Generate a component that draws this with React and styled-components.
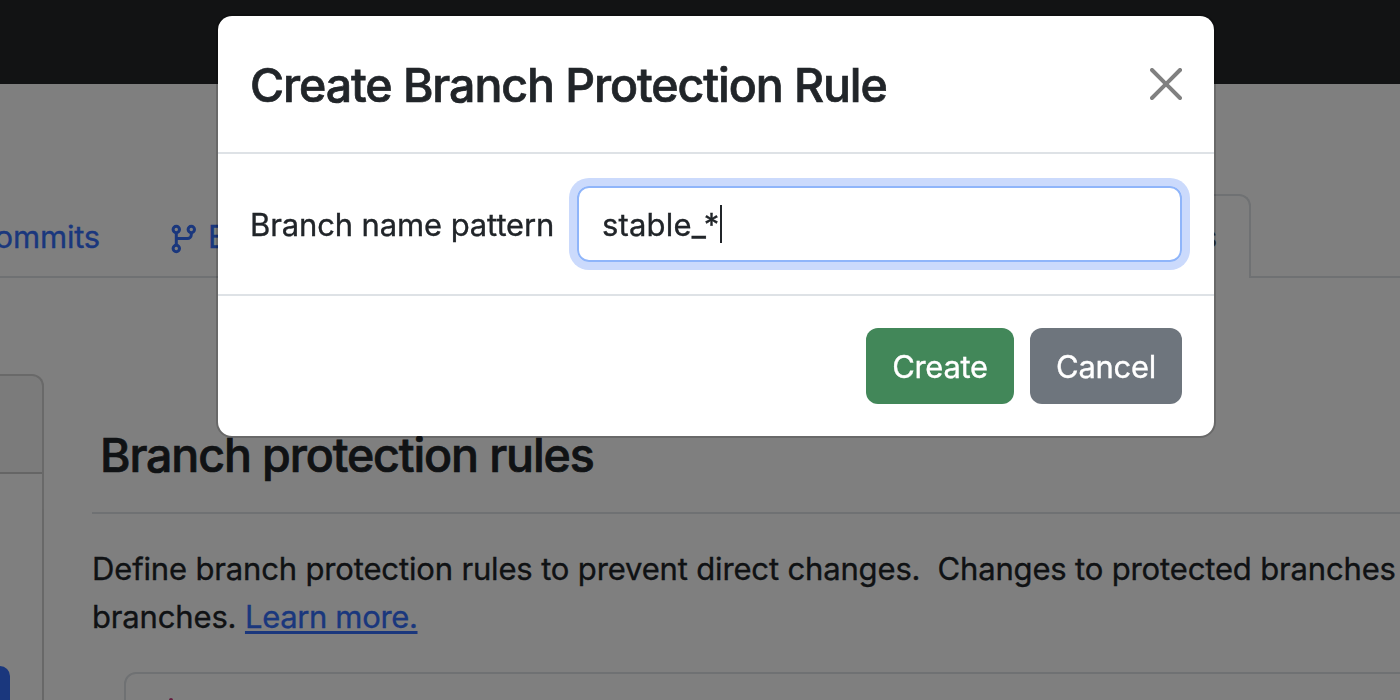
import React from 'react';
import styled, { createGlobalStyle } from 'styled-components';

const GlobalStyle = createGlobalStyle`
  *, *::before, *::after { box-sizing: border-box; }
  html, body { margin: 0; height: 100%; overflow: hidden; }
  body {
    background: #fff;
    color: #212529;
    font-family: Inter, "Liberation Sans", sans-serif;
    font-size: 31px;
    font-weight: 400;
    line-height: 48px;
    -webkit-text-stroke: 0.35px currentColor;
  }
`;

const Page = styled.div`
  display: flex;
  flex-direction: column;
  width: 1400px;
  height: 700px;
  overflow: hidden;
`;

const TopBar = styled.header`
  flex: none;
  height: 84px;
  background: #242628;
`;

const Tabs = styled.nav`
  flex: none;
  display: flex;
  height: 84px;
  margin-top: 110px;
  padding-right: 149px;
  border-bottom: 2px solid #dee2e6;
`;

const Tab = styled.a`
  display: flex;
  align-items: center;
  gap: 8px;
  height: 84px;
  padding: 0 32px;
  border: 2px solid transparent;
  border-bottom: 0;
  border-radius: 12px 12px 0 0;
  color: #346efa;
  white-space: nowrap;
  letter-spacing: -0.2px;
`;

const ClippedTab = styled(Tab)`
  width: 134px;
  padding-left: 0;
  border-left: 0;
  border-radius: 0;
  justify-content: flex-end;
`;

const ActiveTab = styled(Tab)`
  margin-left: auto;
  color: #495057;
  background: #fff;
  border-color: #dee2e6;
`;

const BranchIcon = styled.svg`
  width: 32px;
  height: 32px;
  margin-top: 2px;
  fill: none;
  stroke: currentColor;
`;

const Content = styled.div`
  flex: 1;
  display: flex;
  align-items: flex-start;
  min-height: 0;
`;

const Sidebar = styled.aside`
  flex: none;
  width: 44px;
  height: 360px;
  margin-top: 96px;
  border: 2px solid rgba(0, 0, 0, 0.175);
  border-left: 0;
  border-radius: 0 12px 0 0;
  overflow: hidden;
`;

const SidebarHeader = styled.div`
  height: 98px;
  background: rgba(0, 0, 0, 0.03);
  border-bottom: 2px solid rgba(0, 0, 0, 0.175);
`;

const SidebarButton = styled.div`
  width: 10px;
  height: 76px;
  margin-top: 192px;
  border-radius: 0 12px 12px 0;
  background: #346efa;
`;

const Main = styled.main`
  flex: none;
  width: 1400px;
  margin-left: 48px;
  padding-top: 148px;
`;

const SectionTitle = styled.h2`
  margin: 0 0 31px;
  padding: 0 8px 28px;
  border-bottom: 2px solid #dee2e6;
  font-size: 46.5px;
  font-weight: 500;
  line-height: 58px;
  letter-spacing: -1.12px;
  -webkit-text-stroke: 0.7px currentColor;
`;

const Description = styled.p`
  margin: 0;
  white-space: pre;
  letter-spacing: -0.155px;
`;

const Link = styled.a`
  color: #346efa;
  text-decoration: underline;
  text-decoration-thickness: 3px;
  text-underline-offset: 3px;
  letter-spacing: -0.35px;
`;

const RuleCard = styled.div`
  height: 120px;
  margin: 31px 0 0 32px;
  padding: 24px 32px;
  border: 2px solid #dee2e6;
  border-radius: 12px;
`;

const RuleMark = styled.div`
  width: 4px;
  height: 24px;
  margin-left: 11px;
  border-radius: 2px;
  background: #c63a7d;
`;

const Backdrop = styled.div`
  position: fixed;
  inset: 0;
  display: flex;
  justify-content: center;
  align-items: flex-start;
  padding: 14px 0 0 32px;
  background: rgba(0, 0, 0, 0.5);
`;

const Dialog = styled.section`
  width: 1000px;
  border: 2px solid rgba(0, 0, 0, 0.175);
  border-radius: 16px;
  background: #fff;
  background-clip: padding-box;
`;

const DialogHeader = styled.header`
  display: flex;
  align-items: center;
  justify-content: space-between;
  height: 138px;
  padding: 0 32px;
  border-bottom: 2px solid #dee2e6;
`;

const DialogTitle = styled.h1`
  margin: 2px 0 0;
  font-size: 46.5px;
  font-weight: 500;
  line-height: 72px;
  letter-spacing: -1.08px;
  -webkit-text-stroke: 0.7px currentColor;
`;

const CloseIcon = styled.svg`
  width: 32px;
  height: 32px;
  fill: #808080;
`;

const DialogBody = styled.div`
  display: flex;
  align-items: center;
  justify-content: space-between;
  height: 140px;
  padding: 0 32px;
`;

const Label = styled.label`
  letter-spacing: -0.12px;
  padding-top: 2px;
`;

const Field = styled.div`
  display: flex;
  align-items: center;
  width: 605px;
  height: 76px;
  padding: 0 23px;
  border: 2px solid #8fb5fa;
  border-radius: 12px;
  box-shadow: 0 0 0 8px #cbdafc;
`;

const FieldText = styled.span`
  padding-top: 2px;
  letter-spacing: 0.17px;
`;

const Caret = styled.span`
  width: 2px;
  height: 38px;
  background: #212529;
`;

const DialogFooter = styled.footer`
  display: flex;
  align-items: center;
  justify-content: flex-end;
  gap: 16px;
  height: 142px;
  padding: 0 32px;
  border-top: 2px solid #dee2e6;
`;

const Button = styled.button`
  width: ${(p) => p.$width}px;
  height: 76px;
  padding: 2px 0 0;
  border: 0;
  border-radius: 12px;
  background: ${(p) => p.$color};
  color: #fff;
  font: inherit;
  letter-spacing: -0.3px;
`;

export default function App() {
  return (
    <>
      <GlobalStyle />
      <Page>
        <TopBar />
        <Tabs>
          <ClippedTab>Commits</ClippedTab>
          <Tab>
            <BranchIcon viewBox="0 0 32 32" strokeWidth="3">
              <circle cx="8.3" cy="7.5" r="3.2" />
              <circle cx="8.3" cy="26.5" r="3.2" />
              <circle cx="23.3" cy="7.5" r="3.2" />
              <path d="M8.3 11v12M23.3 11v1.500a4 4 0 0 1-4 4H8.300" />
            </BranchIcon>
            Branches
          </Tab>
          <ActiveTab>Settings</ActiveTab>
        </Tabs>
        <Content>
          <Sidebar>
            <SidebarHeader />
            <SidebarButton />
          </Sidebar>
          <Main>
            <SectionTitle>Branch protection rules</SectionTitle>
            <Description>
              {'Define branch protection rules to prevent direct changes.  Changes to protected branches\nbranches. '}
              <Link>Learn more.</Link>
            </Description>
            <RuleCard>
              <RuleMark />
            </RuleCard>
          </Main>
        </Content>
      </Page>
      <Backdrop>
        <Dialog>
          <DialogHeader>
            <DialogTitle>Create Branch Protection Rule</DialogTitle>
            <CloseIcon viewBox="0 0 16 16">
              <path d="M.293.293a1 1 0 0 1 1.414 0L8 6.586 14.293.293a1 1 0 1 1 1.414 1.414L9.414 8l6.293 6.293a1 1 0 0 1-1.414 1.414L8 9.414l-6.293 6.293a1 1 0 0 1-1.414-1.414L6.586 8 .293 1.707a1 1 0 0 1 0-1.414z" />
            </CloseIcon>
          </DialogHeader>
          <DialogBody>
            <Label>Branch name pattern</Label>
            <Field>
              <FieldText>stable_*</FieldText>
              <Caret />
            </Field>
          </DialogBody>
          <DialogFooter>
            <Button $width={148} $color="#428759">Create</Button>
            <Button $width={152} $color="#6e757d">Cancel</Button>
          </DialogFooter>
        </Dialog>
      </Backdrop>
    </>
  );
}
